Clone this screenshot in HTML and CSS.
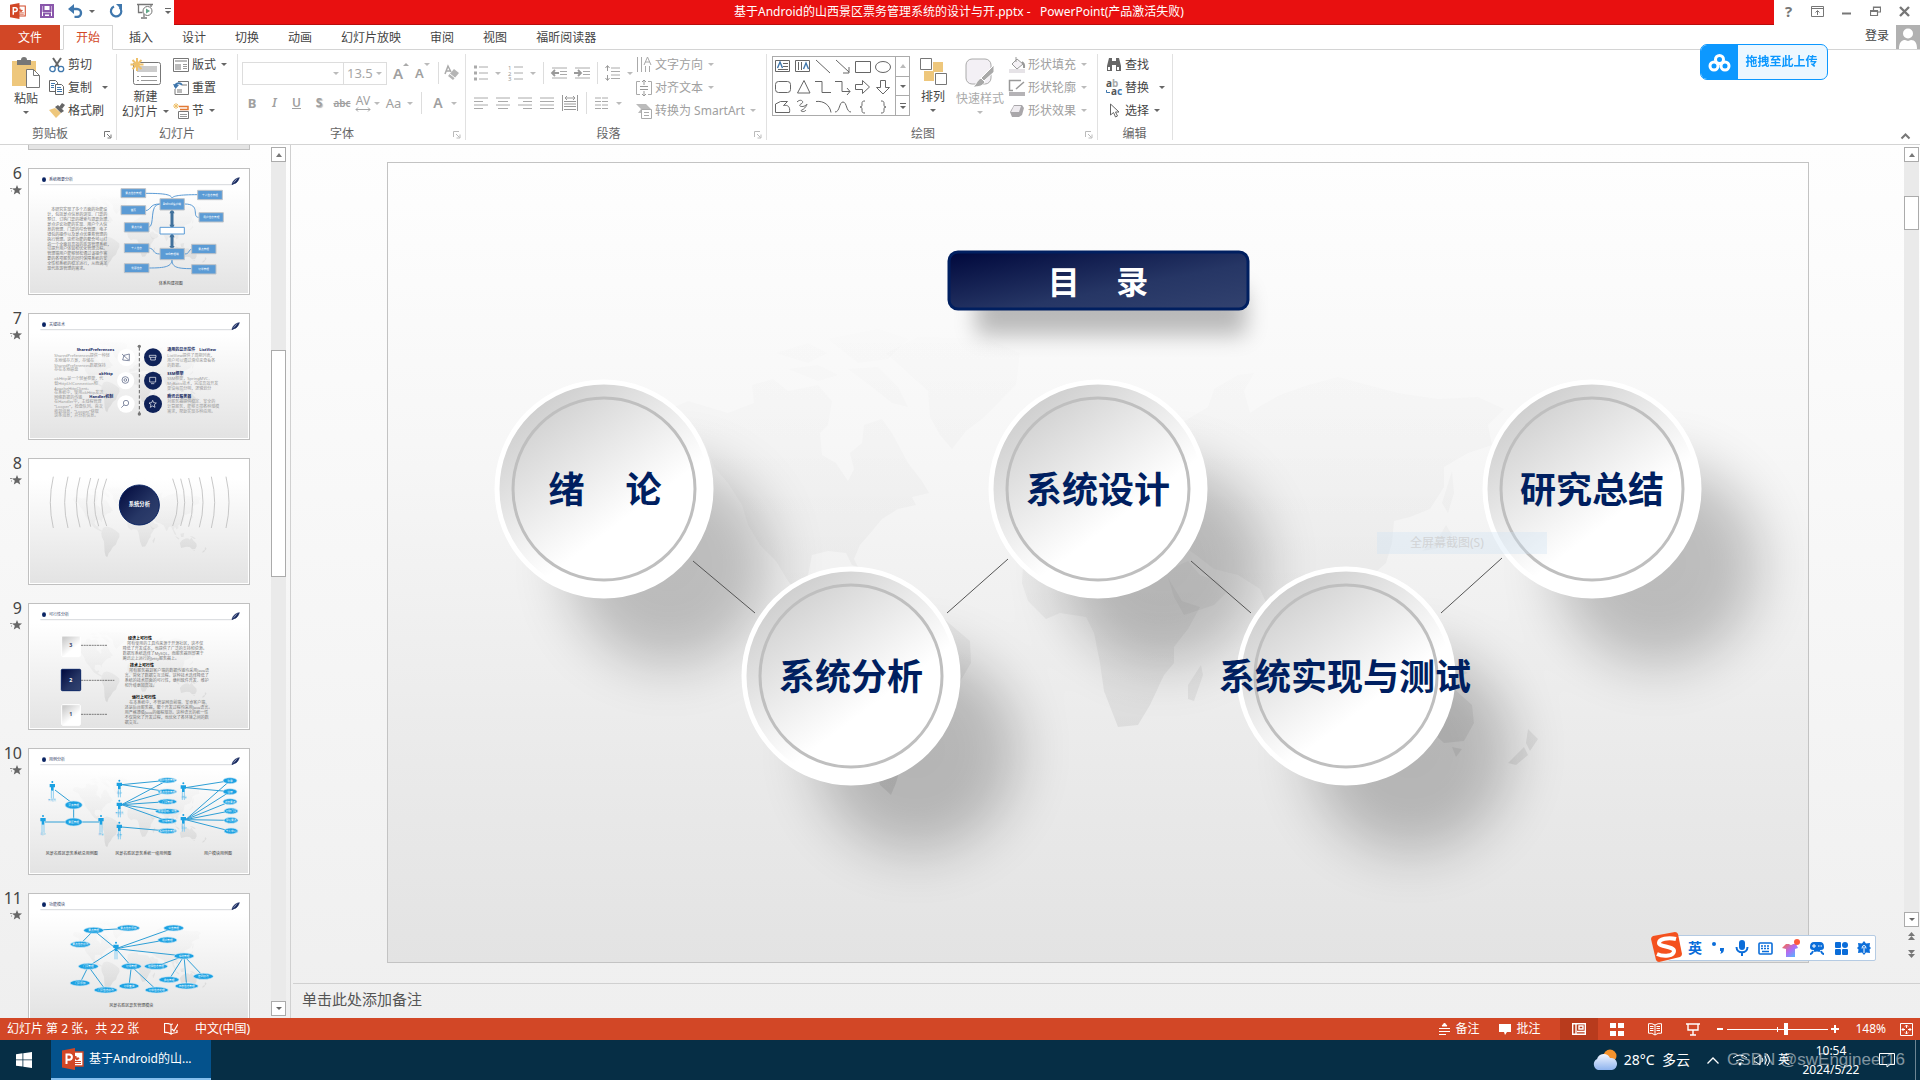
FILE: index.html
```html
<!DOCTYPE html>
<html lang="zh-CN">
<head>
    <meta charset="UTF-8">
    <title>基于Android的山西景区票务管理系统的设计与开.pptx - PowerPoint</title>
    <link rel="stylesheet" href="styles.css">
</head>
<body>
<svg class="defs" width="0" height="0">
    <defs>
        <linearGradient id="mapFill" gradientUnits="userSpaceOnUse" x1="0" y1="170" x2="0" y2="640">
            <stop offset="0" stop-color="#000" stop-opacity="0.005"/>
            <stop offset="0.5" stop-color="#000" stop-opacity="0.03"/>
            <stop offset="1" stop-color="#000" stop-opacity="0.08"/>
        </linearGradient>
        <linearGradient id="disc" x1="0.15" y1="0.1" x2="0.75" y2="0.9">
            <stop offset="0" stop-color="#cdcdcd"/>
            <stop offset="0.7" stop-color="#fff"/>
        </linearGradient>
        <linearGradient id="navy" x1="0" y1="0" x2="1" y2="1">
            <stop offset="0" stop-color="#00083c"/>
            <stop offset="0.6" stop-color="#263665"/>
            <stop offset="1" stop-color="#32426f"/>
        </linearGradient>
        <linearGradient id="shirt" x1="0" y1="0" x2="1" y2="1">
            <stop offset="0" stop-color="#ff6a3c"/>
            <stop offset="0.5" stop-color="#b06cf5"/>
            <stop offset="1" stop-color="#3fc8ff"/>
        </linearGradient>
        <linearGradient id="cloud" x1="0" y1="0" x2="0" y2="1">
            <stop offset="0" stop-color="#f2f6ff"/>
            <stop offset="1" stop-color="#8fb4ee"/>
        </linearGradient>
        <filter id="blur" x="-50%" y="-50%" width="200%" height="200%"><feGaussianBlur stdDeviation="28"/></filter>
        <filter id="blurSmall" x="-20%" y="-80%" width="140%" height="260%"><feGaussianBlur stdDeviation="11"/></filter>

        <!-- world map -->
        <symbol id="map" viewBox="0 0 1420 799">
            <g fill="url(#mapFill)">
                <path d="M282 246L300 238 340 250 366 240 364 222 385 216 400 228 430 222 444 238 440 262 432 270 434 292 448 300 460 318 466 306 462 290 474 280 476 262 494 256 504 270 520 300 534 318 541 330 524 334 528 342 510 346 494 356 484 368 472 382 466 396 470 404 464 402 458 390 440 388 424 392 420 412 432 430 446 424 452 432 442 442 456 452 470 460 466 466 440 454 418 440 400 418 388 398 372 382 360 362 354 342 340 320 326 304 316 280 296 272 280 262Z"/>
                <path d="M388 190L420 180 440 190 420 200ZM400 206L430 202 450 212 430 218ZM440 176L490 166 520 176 500 196 470 200ZM460 206L490 204 510 224 520 244 504 240 484 224Z"/>
                <path d="M498 190L530 174 600 176 632 190 628 222 610 240 594 256 578 268 564 286 552 272 542 254 540 228 520 210Z"/>
                <path d="M476 440L500 432 530 440 556 456 582 478 583 500 570 522 560 550 540 566 526 590 512 606 508 620 503 632 492 622 486 596 484 560 482 530 468 500 464 476Z"/>
                <path d="M636 386L660 376 700 374 704 386 740 390 770 394 782 418 794 438 812 444 800 466 786 484 786 500 776 512 762 542 750 562 730 564 716 528 712 500 706 470 698 454 672 450 658 456 640 438 634 420Z"/>
                <path d="M813 502L815 512 806 538 800 536 800 522Z"/>
                <path d="M778 408L800 398 812 412 830 418 838 430 826 442 796 452 786 434Z"/>
                <path d="M648 370L646 350 670 348 676 330 700 318 724 300 760 280 800 256 820 244 826 226 850 212 866 210 856 228 862 250 874 242 892 232 920 222 950 214 980 222 1010 230 1050 236 1090 234 1116 246 1100 262 1104 282 1080 290 1056 304 1056 324 1042 346 1022 354 1006 358 1004 380 998 400 980 416 966 424 966 444 954 450 944 432 936 450 948 472 954 490 942 482 930 456 918 432 904 436 894 456 888 462 880 444 872 426 850 412 826 406 808 392 790 380 774 376 760 364 730 366 714 372 700 354 680 366Z"/>
                <path d="M1064 308L1066 330 1060 350 1054 340ZM1058 362L1064 372 1048 386 1034 388 1050 376ZM944 494L960 500 974 512 966 516ZM980 480L1004 474 1000 500 984 500ZM1040 494L1060 498 1080 510 1070 514Z"/>
                <path d="M976 540L990 522 1012 510 1030 508 1040 518 1052 504 1064 524 1084 542 1086 560 1076 578 1056 580 1040 566 1020 564 984 572Z"/>
                <path d="M1064 584L1074 586 1068 594ZM1140 566L1150 576 1142 588 1138 580ZM1136 584L1140 592 1128 602 1120 600Z"/>
            </g>
        </symbol>

        <symbol id="ppt" viewBox="0 0 22 22">
            <path d="M12 4h9v14h-9z" fill="#fff" stroke="#d24726" stroke-width="1.4"/>
            <path d="M14 8a2 2 0 1 0 3 2h-3zM13 13.500h6M13 15.500h6" fill="#d24726" stroke="#d24726"/>
            <path d="M0 2.500L13 0v22L0 19.500z" fill="#d24726"/>
            <path d="M4.500 16V6.500h2.800a2.600 2.600 0 0 1 0 5.200H4.800" fill="none" stroke="#fff" stroke-width="2"/>
        </symbol>
        <symbol id="star" viewBox="0 0 12 10">
            <path d="M7 0l1.300 3.300 3.700.2-2.800 2.300 1 3.700L7 7.500 3.800 9.500l1-3.700L2 3.500l3.700-.2z" fill="#666"/>
            <path d="M0 3.500h2M1 6h1" stroke="#777" stroke-width=".8"/>
        </symbol>
        <symbol id="launcher" viewBox="0 0 8 8">
            <path d="M.5 6V.5H6M3 3l3.500 3.500M7 3.500V7H3.500" fill="none" stroke="currentColor"/>
        </symbol>

        <!-- header strip shared by the content slides -->
        <g id="slideHead">
            <ellipse cx="48" cy="35" rx="6" ry="7" fill="#0a2463"/>
            <path d="M37 50H612" stroke="#c3c6cc" stroke-width="2"/>
            <path d="M612 50c2-10 8-18 22-21-3 10-9 17-16 18l-6 3z" fill="#16295f" stroke="#16295f" stroke-width="2"/>
            <path d="M617 44l9-10" stroke="#dde" stroke-width="2"/>
        </g>
        <g id="actor">
            <circle cx="0" cy="-18" r="3" fill="#1ba1e2"/>
            <path d="M-8-12H8V-2H4V8H-4V-2H-8z" fill="#1ba1e2"/>
            <path d="M-3 8V32M3 8V32" stroke="#8bcdf0" stroke-width="3"/>
        </g>
    </defs>
</svg>

<div class="app">
    <header class="titlebar">
        <div class="quick">
            <svg width="16" height="16"><use href="#ppt"/></svg>
            <button class="save" title="保存"><svg width="14" height="14" viewBox="0 0 14 14"><path d="M1 1h12v12H1zM3.500 1v6h7V1M4 13V9.500h6V13" fill="none" stroke="#8a57ab" stroke-width="2"/></svg></button>
            <button class="undo" title="撤消"><svg width="15" height="14" viewBox="0 0 15 14"><path d="M2 5h7a4 4 0 0 1 0 8H6.500" fill="none" stroke="#3f77ad" stroke-width="2.400"/><path d="M6 0L0 5l6 5z" fill="#3f77ad"/></svg><i class="caret"></i></button>
            <button class="redo" title="重复"><svg width="14" height="14" viewBox="0 0 14 14"><path d="M5 2.400A5.200 5.200 0 1 0 10.500 3.200" fill="none" stroke="#3f77ad" stroke-width="2.200"/><path d="M7 0h6v6z" fill="#3f77ad"/></svg></button>
            <button class="show" title="从头开始"><svg width="16" height="16" viewBox="0 0 16 16"><path d="M0 1.500h16M1.500 2v7.500h4M14 2v2M7 11v3M4 15h6" fill="none" stroke="#777" stroke-width="1.300"/><circle cx="10.500" cy="8" r="4.500" fill="#fff" stroke="#777"/><path d="M9 5.500v5l4-2.500z" fill="#5fa888"/></svg></button>
            <button class="more" title="自定义"><i class="bar"></i><i class="caret"></i></button>
        </div>
        <h1 class="doc-title">基于Android的山西景区票务管理系统的设计与开.pptx -&nbsp;&nbsp; PowerPoint(产品激活失败)</h1>
        <div class="window-buttons">
            <button title="帮助" class="help">?</button>
            <button title="功能区显示选项"><svg width="13" height="11" viewBox="0 0 13 11"><path d="M.5.500h12v10H.5zM.5 2.500h12M6.500 9V5M4.500 6.500l2-2 2 2" fill="none" stroke="#777"/></svg></button>
            <button title="最小化"><svg width="10" height="11" viewBox="0 0 10 11"><path d="M0 7.500h9" stroke="#777" stroke-width="2"/></svg></button>
            <button title="还原"><svg width="11" height="11" viewBox="0 0 11 11"><path d="M3.500 4V1h7v5H8M.5 4.500h7v5h-7zM.5 5.500h7M3.500 1.500h7" fill="none" stroke="#777" stroke-width="1.200"/></svg></button>
            <button title="关闭"><svg width="11" height="11" viewBox="0 0 11 11"><path d="M1 1l9 9M10 1l-9 9" stroke="#777" stroke-width="2.400"/></svg></button>
        </div>
    </header>

    <nav class="tabs">
        <button class="tab file">文件</button>
        <button class="tab active">开始</button>
        <button class="tab">插入</button>
        <button class="tab">设计</button>
        <button class="tab">切换</button>
        <button class="tab">动画</button>
        <button class="tab">幻灯片放映</button>
        <button class="tab">审阅</button>
        <button class="tab">视图</button>
        <button class="tab">福昕阅读器</button>
        <a class="login" href="#">登录</a>
        <svg class="avatar" width="24" height="24" viewBox="0 0 24 24"><path d="M0 0h24v24H0z" fill="#b1b1b1"/><circle cx="12" cy="8.500" r="5" fill="#fff"/><path d="M3 24c0-7 3-9 6-9l3 1 3-1c4 0 6 3 6 9z" fill="#fff"/></svg>
    </nav>

    <section class="ribbon">
        <div class="group clipboard">
            <div class="tools">
                <button class="big">
                    <svg width="28" height="30" viewBox="0 0 28 30"><path d="M0 3h24v25H0z" fill="#eec77c"/><path d="M5 2h4a3 3 0 0 1 6 0h4v5H5z" fill="#777"/><path d="M14.500 11.500h7l6 6v12h-13z" fill="#fff" stroke="#777"/><path d="M21.500 11.500v6h6" fill="none" stroke="#777"/></svg>
                    <span>粘贴</span><i class="caret"></i>
                </button>
                <div class="stack">
                    <button class="small"><svg width="16" height="16" viewBox="0 0 16 16"><path d="M4 1l6 9M12 1L6 10" stroke="#666" stroke-width="2"/><circle cx="3.500" cy="12" r="2.700" fill="none" stroke="#3f77ad" stroke-width="1.300"/><circle cx="12" cy="12" r="2.700" fill="none" stroke="#3f77ad" stroke-width="1.300"/></svg>剪切</button>
                    <button class="small wide"><svg width="16" height="16" viewBox="0 0 16 16"><path d="M.5.500h6l2 2v9h-8z" fill="#fff" stroke="#666"/><path d="M6.500 4.500h6l2 2v8h-8z" fill="#fff" stroke="#666"/><path d="M2 3.500h4M2 5.500h3M2 7.500h3M8 7.500h4M8 9.500h5M8 11.500h5" stroke="#3f77ad"/></svg>复制<i class="caret"></i></button>
                    <button class="small"><svg width="16" height="16" viewBox="0 0 16 16"><path d="M0 7l6-2 6 5-5 5z" fill="#eec77c"/><path d="M6 4l3-2 6 6-3 2z" fill="#666"/><path d="M10 4l3-4 3 2-3 4z" fill="#666"/></svg>格式刷</button>
                </div>
            </div>
            <div class="group-name">剪贴板<svg class="launcher" width="8" height="8"><use href="#launcher"/></svg></div>
        </div>

        <div class="group slides">
            <div class="tools">
                <button class="big">
                    <svg width="31" height="28" viewBox="0 0 31 28"><rect x="3.500" y="4.500" width="27" height="22" rx="2" fill="#fff" stroke="#777"/><path d="M7 8h20v6H7z" fill="#ccc"/><path d="M7 18.500h2M11 18.500h16M7 22.500h2M11 22.500h16" stroke="#999"/><path d="M7 0v13M.5 6.500h13M2.500 2l9 9M11.500 2l-9 9" stroke="#eec06a" stroke-width="2"/></svg>
                    <span>新建</span><span>幻灯片<i class="caret"></i></span>
                </button>
                <div class="stack">
                    <button class="small"><svg width="16" height="14" viewBox="0 0 16 14"><path d="M.5.500h15v13H.5z" fill="#fff" stroke="#777"/><path d="M2 2h12v2H2zM2 6h6v6H2z" fill="#bbb"/><path d="M10 6.500h4M10 8.500h4M10 10.500h4" stroke="#999"/></svg>版式<i class="caret"></i></button>
                    <button class="small"><svg width="16" height="14" viewBox="0 0 16 14"><path d="M5 .5h10.500v13H2V8" fill="#fff" stroke="#777"/><path d="M4 8h5v4H4zM9 3h5v2H9z" fill="#bbb"/><path d="M2 6c0-4 5-5 7-2" fill="none" stroke="#3f77ad" stroke-width="1.800"/><path d="M0 3l2.500 5L6 4z" fill="#3f77ad"/></svg>重置</button>
                    <button class="small"><svg width="16" height="16" viewBox="0 0 16 16"><path d="M6 3.500h9v3H7" fill="none" stroke="#e27a35" stroke-width="1.500"/><path d="M5.500 8.500h10v7h-10z" fill="#fff" stroke="#777"/><path d="M7 11.500h7M7 13.500h7" stroke="#999"/><path d="M3 0v6M0 3h6M1 1l4 4M5 1L1 5" stroke="#eec06a"/></svg>节<i class="caret"></i></button>
                </div>
            </div>
            <div class="group-name">幻灯片</div>
        </div>

        <div class="group font disabled">
            <div class="tools rows">
                <div class="row">
                    <label class="combo face"><select aria-label="字体"><option></option></select><i class="caret"></i></label>
                    <label class="combo size"><select aria-label="字号"><option>13.5</option></select><i class="caret"></i></label>
                    <button class="glyph grow" title="增大字号">A<i class="caret up"></i></button>
                    <button class="glyph shrink" title="减小字号">A<i class="caret"></i></button>
                    <i class="sep"></i>
                    <button title="清除格式"><svg width="14" height="16" viewBox="0 0 14 16"><path d="M0 9L3 1l3 6M1 6h4" fill="none" stroke="#aaa" stroke-width="1.500"/><path d="M9 4l5 4-6 7-5-4z" fill="#b5b5b5"/><path d="M5 9l5 4" stroke="#fff"/></svg></button>
                </div>
                <div class="row second">
                    <button class="glyph b">B</button>
                    <button class="glyph i">I</button>
                    <button class="glyph u">U</button>
                    <button class="glyph s">S</button>
                    <button class="glyph abc">abc</button>
                    <button class="glyph av">AV<svg width="16" height="5" viewBox="0 0 16 5"><path d="M1 2.500h14M3 .5l-2 2 2 2M13 .5l2 2-2 2" fill="none" stroke="#a5a5a5"/></svg></button><i class="caret"></i>
                    <button class="glyph aa">Aa</button><i class="caret"></i>
                    <i class="sep"></i>
                    <button class="glyph color">A</button><i class="caret"></i>
                </div>
            </div>
            <div class="group-name">字体<svg class="launcher" width="8" height="8"><use href="#launcher"/></svg></div>
        </div>

        <div class="group para disabled">
            <div class="tools">
                <div class="rows">
                    <div class="row">
                        <svg width="14" height="16" viewBox="0 0 14 16"><path d="M0 2h3M0 8h3M0 14h3" stroke="#aaa" stroke-width="3"/><path d="M5 2h9M5 8h9M5 14h9" stroke="#aaa"/></svg><i class="caret"></i>
                        <svg width="15" height="16" viewBox="0 0 15 16"><text x="0" y="5" class="tiny">1</text><text x="0" y="11" class="tiny">2</text><text x="0" y="16" class="tiny">3</text><path d="M6 2h9M6 8h9M6 14h9" stroke="#aaa"/></svg><i class="caret"></i>
                        <i class="sep"></i>
                        <svg width="16" height="12" viewBox="0 0 16 12"><path d="M1 1h15M9 4.500h7M9 7.500h7M1 11h15" stroke="#aaa"/><path d="M1 6h7M4 3L1 6l3 3" fill="none" stroke="#999" stroke-width="1.800"/></svg>
                        <svg width="16" height="12" viewBox="0 0 16 12"><path d="M1 1h15M9 4.500h7M9 7.500h7M1 11h15" stroke="#aaa"/><path d="M0 6h7M4 3l3 3-3 3" fill="none" stroke="#999" stroke-width="1.800"/></svg>
                        <i class="sep"></i>
                        <svg width="15" height="16" viewBox="0 0 15 16"><path d="M6 3h9M6 6.500h9M6 10h9M6 13.500h9" stroke="#aaa"/><path d="M2.500 1v5M2.500 10v5M.5 3l2-2.500 2 2.500M.5 13l2 2.500 2-2.500" fill="none" stroke="#999"/></svg><i class="caret"></i>
                    </div>
                    <div class="row second">
                        <svg width="14" height="12" viewBox="0 0 14 12"><path d="M0 1h14M0 4.500h9M0 8h14M0 11.500h9" stroke="#aaa"/></svg>
                        <svg width="14" height="12" viewBox="0 0 14 12"><path d="M0 1h14M2 4.500h10M0 8h14M2 11.500h10" stroke="#aaa"/></svg>
                        <svg width="14" height="12" viewBox="0 0 14 12"><path d="M0 1h14M5 4.500h9M0 8h14M5 11.500h9" stroke="#aaa"/></svg>
                        <svg width="14" height="12" viewBox="0 0 14 12"><path d="M0 1h14M0 4.500h14M0 8h14M0 11.500h14" stroke="#aaa"/></svg>
                        <svg width="16" height="16" viewBox="0 0 16 16"><path d="M.5 0v16M15.500 0v16M2 6.500h12M2 9h12M2 11.500h12M2 14.500h12M3 3h10M5 1L3 3l2 2M11 1l2 2-2 2" fill="none" stroke="#999"/></svg>
                        <i class="sep"></i>
                        <svg width="13" height="12" viewBox="0 0 13 12"><path d="M0 1h6M0 4.500h6M0 8h6M0 11.500h6M7 1h6M7 4.500h6M7 8h6M7 11.500h6" stroke="#aaa"/></svg><i class="caret"></i>
                    </div>
                </div>
                <div class="stack">
                    <button class="small"><svg width="16" height="16" viewBox="0 0 16 16"><path d="M1.500 0v15M5.500 0v15M9.500 9v6M13.500 9v6M8 8l3.500-8L15 8M9 5h5" fill="none" stroke="#aaa"/></svg>文字方向<i class="caret"></i></button>
                    <button class="small"><svg width="16" height="16" viewBox="0 0 16 16"><path d="M4 1.500H.5v13H4M12 1.500h3.500v13H12" fill="none" stroke="#aaa"/><path d="M4 6.500h8M4 9.500h8M8 0v5M8 11v5M6 2l2-2 2 2M6 14l2 2 2-2" fill="none" stroke="#999"/></svg>对齐文本<i class="caret"></i></button>
                    <button class="small"><svg width="16" height="16" viewBox="0 0 16 16"><path d="M0 1h10l5 5H9L5 10H2l3-4z" fill="#bbb"/><path d="M5.500 6.500h10v9h-10z" fill="#fff" stroke="#aaa"/><path d="M8 9.500h5M8 12.500h5" stroke="#aaa"/></svg>转换为 SmartArt<i class="caret"></i></button>
                </div>
            </div>
            <div class="group-name">段落<svg class="launcher" width="8" height="8"><use href="#launcher"/></svg></div>
        </div>

        <div class="group draw">
            <div class="tools">
                <div class="gallery">
                    <svg width="122" height="58" viewBox="0 0 122 58">
                        <g fill="none" stroke="#666">
                            <path d="M2.500 3.500h14v11h-14zM22.500 3.500h14v11h-14zM10 6.500h5M10 9.500h5M5 12.500h10M25.500 5v8M28.500 5v8M43 3l14 13M63 3l13 12M76 10v6h-6M82.500 4.500h15v11h-15z"/>
                            <ellipse cx="110" cy="10" rx="7.500" ry="5.500"/>
                            <rect x="2.500" y="24.500" width="15" height="11" rx="3"/>
                            <path d="M31 23.500l6 12.500H24.500zM42 24.500h7v11h9M62 24.500h7v10h8M74 31l3 3.500-3 3.500M82.500 27.500h7v-4l7 6.500-7 6.500v-4h-7zM107.500 23.500h5v7h4L110 37l-6.500-6.500h4z"/>
                            <path d="M2.500 55.500V47l5-2.500h7l-4 4c4-1 7 1 6 7zM24 45c4-4 8 0 4 2s2 4 5 1-1 4-4 5 2 3 4 0M43 44.500c8-1 14 4 15 11M62 55c5 0 4-10 8-10s3 10 8 10M92 44c-3 0-3 1-3 3s0 3-2 3c2 0 2 1 2 3s0 3 3 3M108 44c3 0 3 1 3 3s0 3 2 3c-2 0-2 1-2 3s0 3-3 3"/>
                        </g>
                        <path d="M4.500 11L7 5l2.500 6M30.500 12L33 6l2.500 6" fill="none" stroke="#3f77ad" stroke-width="1.400"/>
                    </svg>
                    <div class="gallery-scroll">
                        <button title="上一行"><i class="caret up"></i></button>
                        <button title="下一行"><i class="caret"></i></button>
                        <button title="其他"><i class="bar"></i><i class="caret"></i></button>
                    </div>
                </div>
                <button class="big">
                    <svg width="27" height="28" viewBox="0 0 27 28"><path d="M13 4h10v10H13zM4 13h10v10H4z" fill="#eec77c"/><path d="M.5.500h11v11H.5zM15.500 15.500h11v11h-11z" fill="#fff" stroke="#777"/></svg>
                    <span>排列</span><i class="caret"></i>
                </button>
                <button class="big faded">
                    <svg width="30" height="30" viewBox="0 0 30 30"><rect x="1" y="1" width="25" height="25" rx="6" fill="#f3f0f5" stroke="#aaa"/><path d="M29 7v7L19 23l-3-3zM16 20l4 4c-2 4-6 5-12 5 4-3 3-6 8-9z" fill="#a9a9a9" stroke="#fff"/></svg>
                    <span>快速样式</span><i class="caret"></i>
                </button>
                <div class="stack disabled">
                    <button class="small"><svg width="16" height="16" viewBox="0 0 16 16"><path d="M0 12h16v4H0z" fill="#e6e3e7"/><path d="M8 2l6 5-6 5-5-5zM7 5V0" fill="#f5f2f6" stroke="#999"/><path d="M13 5c3 2 2 5 2 6" fill="none" stroke="#999" stroke-width="2"/></svg>形状填充<i class="caret"></i></button>
                    <button class="small"><svg width="16" height="16" viewBox="0 0 16 16"><path d="M0 12h16v4H0z" fill="#b5b3b6"/><path d="M12 .5H.5v10H4M15 2L7 9" fill="none" stroke="#999" stroke-width="1.500"/></svg>形状轮廓<i class="caret"></i></button>
                    <button class="small"><svg width="16" height="14" viewBox="0 0 16 14"><path d="M1 8l4-7h8l2 3-2 7-3 2H3z" fill="#a9a7aa"/><path d="M2 8l3-6h7l-2 6z" fill="#eeebef"/></svg>形状效果<i class="caret"></i></button>
                </div>
            </div>
            <div class="group-name">绘图<svg class="launcher" width="8" height="8"><use href="#launcher"/></svg></div>
        </div>

        <div class="group edit">
            <div class="tools">
                <div class="stack">
                    <button class="small"><svg width="16" height="14" viewBox="0 0 16 14"><path d="M3 0h3v3h4V0h3l2 8v5h-5V7H6v6H1V8z" fill="#666"/><path d="M2 9h2v3H2zM11 9h2v3h-2z" fill="#fff"/></svg>查找</button>
                    <button class="small wide"><svg width="16" height="16" viewBox="0 0 16 16"><text x="0" y="7" class="ab">a</text><text x="6" y="7" class="ab grey">b</text><text x="5" y="15" class="ab">a</text><text x="11" y="15" class="ab blue">c</text><path d="M.5 10v2.500H4" fill="none" stroke="#3f77ad"/></svg>替换<i class="caret"></i></button>
                    <button class="small"><svg width="16" height="16" viewBox="0 0 16 16"><path d="M4.500 1v11l3-2.500 2 4.500 2-1-2-4h3.500z" fill="#fff" stroke="#666"/></svg>选择<i class="caret"></i></button>
                </div>
            </div>
            <div class="group-name">编辑</div>
        </div>
        <button class="collapse" title="折叠功能区"><svg width="9" height="6" viewBox="0 0 9 6"><path d="M.5 5.500l4-4 4 4" fill="none" stroke="#777" stroke-width="2"/></svg></button>
    </section>

    <main class="work">
        <aside class="panel">
            <ol class="thumbs">
                <li class="cut"><span></span><div class="thumb"></div></li>
                <li>
                    <span class="num">6<svg width="12" height="10"><use href="#star"/></svg></span>
                    <div class="thumb">
                        <svg viewBox="6 6 654 369">
                            <use href="#map" x="6" y="6" width="654" height="369"/>
                            <use href="#slideHead"/>
                            <text x="63" y="39">系统概要分析</text>
                            <g transform="translate(-84 -84)">
                                <g class="copy">
                                    <text x="154" y="213">本研究实现了多个方面的功能设</text>
                                    <text x="142" y="228">计，包括景点信息的浏览、门票的</text>
                                    <text x="142" y="243">预订、订购门票的搜索与退票处理、</text>
                                    <text x="142" y="257">景点评论功能的实现、用户个人信</text>
                                    <text x="142" y="272">息的管理、门票的综合管理、电子</text>
                                    <text x="142" y="287">钱包的操作以及景点优惠券管理的</text>
                                    <text x="142" y="302">执行管理。这些功能的整合可以打</text>
                                    <text x="142" y="317">造一个全面且高效的旅游管理系统，</text>
                                    <text x="142" y="331">以提升用户体验和优化管理流程。</text>
                                    <text x="142" y="346">管理端用户能够轻松通过该操作需</text>
                                    <text x="142" y="361">要的各项服务的同时保障系统的安</text>
                                    <text x="142" y="376">全性和系统的稳定运行，从而满足</text>
                                    <text x="142" y="390">现代旅游管理的需求。</text>
                                </g>
                                <path d="M436 160c60 0 76 4 80 14 4-6 20-10 78-10M436 212c20-2 10-20 44-20M446 262c20-4 0-70 34-70M554 192c50 0 20 40 42 40M446 324c20 2 10 18 34 18M554 342c16 0 10-14 22-14M446 384c50 0 70-4 70-26 0 22 10 28 60 28" fill="none" stroke="#5b9bd5" stroke-width="3"/>
                                <path d="M516 212v48M516 284v38" stroke="#41719c" stroke-width="9"/>
                                <path d="M508 220l8-12 8 12zM508 254l8 12 8-12zM508 292l8-12 8 12zM508 318l8 12 8-12z" fill="#41719c"/>
                                <g fill="#5b9bd5" stroke="#bfc3c8" stroke-width="3">
                                    <path d="M363 146h74v27h-74zM593 151h74v28h-74zM480 176h73v34h-73zM363 197h74v27h-74zM597 218h73v28h-73zM373 248h74v28h-74zM373 311h74v27h-74zM575 313h73v28h-73zM480 325h73v34h-73zM373 371h74v27h-74zM575 374h73v28h-73z"/>
                                </g>
                                <path d="M480 262h73v20h-73z" fill="#fff" stroke="#5b9bd5" stroke-width="3"/>
                                <g class="node">
                                    <text x="400" y="163">景点信息管理</text><text x="630" y="168">个人信息管理</text><text x="516" y="196">Android客户端</text><text x="400" y="214">首页</text><text x="634" y="235">用户信息管理</text><text x="410" y="265">景点分类</text><text x="410" y="328">个人信息</text><text x="611" y="330">景点管理</text><text x="516" y="345">web管理端</text><text x="410" y="388">优惠信息</text><text x="611" y="391">订单管理</text>
                                </g>
                                <text x="512" y="435" class="cap">体系构建视图</text>
                            </g>
                        </svg>
                    </div>
                </li>
                <li>
                    <span class="num">7<svg width="12" height="10"><use href="#star"/></svg></span>
                    <div class="thumb">
                        <svg viewBox="6 6 654 369">
                            <use href="#map" x="6" y="6" width="654" height="369"/>
                            <use href="#slideHead"/>
                            <text x="63" y="39">关键技术</text>
                            <g transform="translate(-84 -519)">
                                <path d="M418 622V820" stroke="#666" stroke-width="3" stroke-dasharray="10 6"/>
                                <circle cx="418" cy="619" r="5" fill="#777"/><circle cx="418" cy="822" r="5" fill="#777"/>
                                <g fill="#fff"><circle cx="379" cy="652" r="26"/><circle cx="377" cy="722" r="26"/><circle cx="378" cy="792" r="26"/></g>
                                <g fill="#0f2259"><circle cx="459" cy="652" r="27"/><circle cx="459" cy="722" r="27"/><circle cx="459" cy="792" r="27"/></g>
                                <g fill="none" stroke="#4a5678" stroke-width="2"><path d="M366 642l22 20v-20l-16 4-4 14 18 2"/><circle cx="376" cy="720" r="10"/><circle cx="376" cy="720" r="4"/><circle cx="378" cy="789" r="8"/><path d="M372 795l-8 8"/></g>
                                <g fill="none" stroke="#fff" stroke-width="2"><path d="M448 646h20v6h-20zM452 652v8h14v-8M449 712h18v14h-18zM453 731h10M458 781l3 7 8 1-6 5 2 8-7-4-7 4 2-8-6-5 8-1z"/></g>
                                <g class="heading">
                                    <text x="230" y="633">SharedPreferences</text><text x="296" y="705">okHttp</text><text x="268" y="774">Handler机制</text>
                                    <text x="502" y="633">通用的显示控件　ListView</text><text x="502" y="706">SSM框架</text><text x="502" y="774">腾讯云服务器</text>
                                </g>
                                <g class="copy faint">
                                    <text x="163" y="651">SharedPreferences提供一种轻</text><text x="163" y="666">本地储存方案，存储在</text><text x="163" y="681">SharedPreferences数据保持</text><text x="163" y="694">存在本地磁盘</text>
                                    <text x="163" y="721">okHttp是一个轻量框架，代</text><text x="163" y="735">替HttpUrlConnection和</text><text x="163" y="750">ApacheHttpClient。</text><text x="163" y="763">在系统中，使用okHttp发送</text><text x="163" y="776">网络数据的传输</text><text x="163" y="790">在Handler中，主线程管理</text><text x="163" y="804">“Looper”，检查队列。首次</text><text x="163" y="819">收到消息，“Looper”获取</text><text x="163" y="832">这条消息，并分析信息。</text>
                                    <text x="502" y="651">ListView提供了周期列表，</text><text x="502" y="667">用户可以通过滑动来查看各</text><text x="502" y="681">的数据。</text><text x="502" y="721">SSM框架，SpringMVC、</text><text x="502" y="736">MyBatis技术，完成高效开发</text><text x="502" y="750">架设每层分明，逻辑划分</text><text x="502" y="790">对服务器提供稳定、安全的</text><text x="502" y="804">计算服务，能够支撑各种规模</text><text x="502" y="819">需求，帮助实现多种应用。</text>
                                </g>
                            </g>
                        </svg>
                    </div>
                </li>
                <li>
                    <span class="num">8<svg width="12" height="10"><use href="#star"/></svg></span>
                    <div class="thumb">
                        <svg viewBox="6 6 654 369">
                            <use href="#map" x="6" y="6" width="654" height="369"/>
                            <g fill="none" stroke="#bdbdbd" stroke-width="2.500">
                                <path d="M76 56q-18 78 0 154M120 56q-20 78 0 154M156 58q-22 76 0 150M188 60q-24 74 0 146M212 62q-26 72 0 142M236 62q-30 72 0 142M594 56q18 78 0 154M550 56q20 78 0 154M514 58q22 76 0 150M482 60q24 74 0 146M458 62q24 72 0 142M434 62q30 72 0 142"/>
                            </g>
                            <circle cx="334" cy="141" r="60" fill="url(#navy)" stroke="#0a2463" stroke-width="3"/>
                            <text x="334" y="145" class="round">系统分析</text>
                        </svg>
                    </div>
                </li>
                <li>
                    <span class="num">9<svg width="12" height="10"><use href="#star"/></svg></span>
                    <div class="thumb">
                        <svg viewBox="6 6 654 369">
                            <use href="#map" x="6" y="6" width="654" height="369"/>
                            <use href="#slideHead"/>
                            <text x="63" y="39">可行性分析</text>
                            <g transform="translate(-84 -459)">
                                <path d="M243 586h80M243 691h100M243 793h80" stroke="#444" stroke-width="2" stroke-dasharray="6 2"/>
                                <g stroke="#fff" stroke-width="3"><rect x="185" y="558" width="56" height="62" rx="3" fill="url(#disc)"/><rect x="185" y="764" width="56" height="62" rx="3" fill="url(#disc)"/></g>
                                <rect x="184" y="658" width="58" height="64" rx="3" fill="url(#navy)" stroke="#0a2463" stroke-width="3"/>
                                <g class="boxnum"><text x="212" y="591">3</text><text x="212" y="696" class="light">2</text><text x="212" y="798">1</text></g>
                                <g class="heading black"><text x="384" y="570">经济上可行性</text><text x="390" y="651">技术上可行性</text><text x="396" y="747">运行上可行性</text></g>
                                <g class="copy">
                                    <text x="382" y="585">所有使用的工具均来源于开源社区，这不仅</text><text x="368" y="600">降低了开发成本，也提供了广泛的支持和资源。</text><text x="368" y="615">数据库系统选择了MySQL，而服务器则部署于</text><text x="368" y="630">腾讯云上运行的Jetty服务器上。</text>
                                    <text x="388" y="666">所有服务器到客户端的数据传输均采用Java语</text><text x="374" y="681">言。简化了数据交互流程。这种技术选择降低了</text><text x="374" y="695">系统的技术层面的可行性，便利软件开发、维护</text><text x="374" y="710">和升级更加高效。</text>
                                    <text x="388" y="762">在本系统中，不管是网页前端、安卓客户端、</text><text x="374" y="777">还是后台服务器，整个开发过程均采用Java语言。</text><text x="374" y="792">用严格遵循Java的编程规范。这种语言的统一性</text><text x="374" y="807">不仅简化了开发过程，也优化了各环境之间的数</text><text x="374" y="821">据交互。</text>
                                </g>
                            </g>
                        </svg>
                    </div>
                </li>
                <li>
                    <span class="num">10<svg width="12" height="10"><use href="#star"/></svg></span>
                    <div class="thumb">
                        <svg viewBox="6 6 654 369">
                            <use href="#map" x="6" y="6" width="654" height="369"/>
                            <use href="#slideHead"/>
                            <text x="63" y="39">用例分析</text>
                            <g transform="translate(-84 -24)">
                                <path d="M165 150L215 188M221 195V246M135 246H298M365 134L502 121M365 134L502 155M365 194L502 121M365 194L502 155M365 194L502 185M365 194L502 214M365 194L502 243M365 261L502 273M557 143L690 122M557 143L690 155M557 239L690 122M557 239L690 155M557 239L690 185M557 239L690 213M557 239L690 241M557 239L690 273" stroke="#2f9fd6" stroke-width="3"/>
                                <use href="#actor" x="157" y="144"/><use href="#actor" x="129" y="246"/><use href="#actor" x="303" y="246"/>
                                <use href="#actor" x="358" y="140"/><use href="#actor" x="358" y="200"/><use href="#actor" x="358" y="266"/>
                                <use href="#actor" x="550" y="148"/><use href="#actor" x="550" y="243"/>
                                <g class="oval">
                                    <ellipse cx="221" cy="195" rx="26" ry="12"/><ellipse cx="221" cy="246" rx="26" ry="12"/>
                                    <ellipse cx="502" cy="121" rx="28" ry="8"/><ellipse cx="502" cy="155" rx="28" ry="8"/><ellipse cx="502" cy="185" rx="28" ry="8"/><ellipse cx="502" cy="214" rx="36" ry="8"/><ellipse cx="502" cy="243" rx="28" ry="8"/><ellipse cx="502" cy="273" rx="28" ry="8"/>
                                    <ellipse cx="690" cy="122" rx="21" ry="9"/><ellipse cx="690" cy="155" rx="21" ry="9"/><ellipse cx="690" cy="185" rx="21" ry="9"/><ellipse cx="693" cy="213" rx="21" ry="9"/><ellipse cx="693" cy="241" rx="21" ry="9"/><ellipse cx="693" cy="273" rx="21" ry="9"/>
                                </g>
                                <g class="node">
                                    <text x="221" y="198">票务管理</text><text x="221" y="249">景区管理</text>
                                    <text x="502" y="124">用户信息管理</text><text x="502" y="158">景点信息管理</text><text x="502" y="188">门票管理</text><text x="502" y="217">优惠活动、公告</text><text x="502" y="246">订单管理</text><text x="502" y="276">系统信息管理</text>
                                    <text x="690" y="125">登录</text><text x="690" y="158">注册</text><text x="690" y="188">浏览景点</text><text x="693" y="216">订购门票</text><text x="693" y="244">评论景点</text><text x="693" y="276">个人中心</text>
                                </g>
                                <g class="who"><text x="156" y="182">管理员</text><text x="129" y="284">用户</text><text x="303" y="284">游客</text><text x="358" y="163">用户</text><text x="358" y="222">管理员</text><text x="358" y="288">超管</text><text x="552" y="173">游客</text><text x="552" y="268">用户</text></g>
                                <text x="215" y="345" class="cap">风景名胜区票务系统总用例图</text>
                                <text x="430" y="345" class="cap">风景名胜区票务系统一级用例图</text>
                                <text x="654" y="345" class="cap">用户模块用例图</text>
                            </g>
                        </svg>
                    </div>
                </li>
                <li>
                    <span class="num">11<svg width="12" height="10"><use href="#star"/></svg></span>
                    <div class="thumb">
                        <svg viewBox="6 6 654 369">
                            <use href="#map" x="6" y="6" width="654" height="369"/>
                            <use href="#slideHead"/>
                            <text x="63" y="39">功能模块</text>
                            <g transform="translate(-84 -459)">
                                <path d="M281 571L385 565M281 571L241 612M281 571L348 626L521 564M348 626L502 599M348 626L552 648M348 626L265 679L240 729M265 679L317 750M348 626L394 679L387 738M394 679L470 750M552 648L468 679M552 648L507 719M552 648L560 738M552 648L610 709" fill="none" stroke="#2f9fd6" stroke-width="3"/>
                                <use href="#actor" x="348" y="626"/>
                                <g class="oval">
                                    <ellipse cx="281" cy="571" rx="30" ry="9"/><ellipse cx="385" cy="564" rx="34" ry="9"/><ellipse cx="241" cy="613" rx="30" ry="9"/><ellipse cx="521" cy="564" rx="30" ry="9"/><ellipse cx="502" cy="600" rx="29" ry="9"/><ellipse cx="552" cy="648" rx="30" ry="9"/><ellipse cx="265" cy="679" rx="30" ry="9"/><ellipse cx="394" cy="679" rx="30" ry="9"/><ellipse cx="468" cy="679" rx="35" ry="9"/><ellipse cx="240" cy="729" rx="30" ry="9"/><ellipse cx="317" cy="750" rx="35" ry="9"/><ellipse cx="387" cy="738" rx="30" ry="9"/><ellipse cx="470" cy="750" rx="35" ry="9"/><ellipse cx="507" cy="719" rx="30" ry="9"/><ellipse cx="560" cy="738" rx="35" ry="9"/><ellipse cx="610" cy="709" rx="30" ry="9"/>
                                </g>
                                <g class="node">
                                    <text x="281" y="574">景点管理</text><text x="385" y="567">景点信息添加</text><text x="241" y="616">景点信息修改</text><text x="521" y="567">公告管理</text><text x="502" y="603">用户管理</text><text x="552" y="651">系统管理</text><text x="265" y="682">门票管理</text><text x="394" y="682">订单管理</text><text x="468" y="682">权限信息管理</text><text x="240" y="732">门票添加</text><text x="317" y="753">门票信息修改</text><text x="387" y="741">订单查询</text><text x="470" y="753">订单信息处理</text><text x="507" y="722">角色管理</text><text x="560" y="741">日志信息管理</text><text x="610" y="712">密码修改</text>
                                </g>
                                <text x="394" y="801" class="cap">风景名胜区票务管理模块</text>
                            </g>
                        </svg>
                    </div>
                </li>
            </ol>
            <div class="scroll">
                <button title="向上"><i class="caret up"></i></button>
                <div class="track"><div class="bar-left"></div></div>
                <button title="向下"><i class="caret"></i></button>
            </div>
        </aside>

        <section class="stage">
            <div class="canvas">
                <div class="slide">
                    <svg viewBox="0 0 1420 799">
                        <use href="#map" width="1420" height="799"/>
                        <rect x="588" y="126" width="270" height="46" fill="#000" opacity=".26" filter="url(#blurSmall)"/>
                        <rect x="561" y="89" width="299" height="57" rx="9" fill="url(#navy)" stroke="#001f60" stroke-width="3"/>
                        <text x="710" y="131" class="slide-title">目&nbsp;&nbsp;&nbsp;&nbsp;&nbsp;录</text>

                        <g filter="url(#blur)" opacity=".22">
                            <circle cx="281" cy="400" r="102"/><circle cx="775" cy="400" r="102"/><circle cx="1269" cy="400" r="102"/>
                            <circle cx="528" cy="587" r="102"/><circle cx="1023" cy="587" r="102"/>
                        </g>
                        <path d="M305 398L367 450M559 450L620 396M803 398L863 450M1053 450L1114 395" stroke="#555"/>
                        <g fill="url(#disc)" stroke="#fff" stroke-width="5">
                            <circle cx="216" cy="326" r="107"/><circle cx="463" cy="513" r="107"/><circle cx="710" cy="326" r="107"/><circle cx="958" cy="513" r="107"/><circle cx="1204" cy="326" r="107"/>
                        </g>
                        <g fill="none" stroke="#bfbfbf" stroke-width="3">
                            <circle cx="216" cy="326" r="91"/><circle cx="463" cy="513" r="91"/><circle cx="710" cy="326" r="91"/><circle cx="958" cy="513" r="91"/><circle cx="1204" cy="326" r="91"/>
                        </g>
                        <g class="topic">
                            <text x="217" y="340">绪&nbsp;&nbsp;&nbsp;&nbsp;&nbsp;论</text>
                            <text x="463" y="527">系统分析</text>
                            <text x="710" y="340">系统设计</text>
                            <text x="957" y="527">系统实现与测试</text>
                            <text x="1204" y="340">研究总结</text>
                        </g>
                        <rect x="989" y="369" width="170" height="22" fill="#cfe3f3" opacity=".35"/>
                        <text x="1022" y="384" class="ghost">全屏幕截图(S)</text>
                    </svg>
                </div>
                <div class="scroll right">
                    <button title="向上"><i class="caret up"></i></button>
                    <div class="track"><div class="bar-right"></div></div>
                    <button title="向下"><i class="caret"></i></button>
                    <svg width="9" height="32" viewBox="0 0 9 32"><path d="M4.500 2L8 6H1zM4.500 6L8 10H1zM1 20h7l-3.500 4zM1 24h7l-3.500 4z" fill="#777"/></svg>
                </div>
            </div>
            <textarea class="notes" aria-label="备注" placeholder="单击此处添加备注"></textarea>

            <div class="ime">
                <svg class="ime-logo" width="32" height="32" viewBox="0 0 32 32"><path d="M3 5L25 1q2 0 3 2l4 20q0 2-2 3L9 31q-2 0-3-2L1 8q0-2 2-3z" fill="#f4511e"/><path d="M26 8C18 6 9 8 9 12s15 3 15 8-10 6-17 3" fill="none" stroke="#fff" stroke-width="4"/></svg>
                <b>英</b>
                <svg width="14" height="14" viewBox="0 0 14 14"><circle cx="3" cy="3" r="2" fill="#0b6dd9"/><path d="M9 7h4c0 4-1 5-4 6 1-1 1-2 1-3H9z" fill="#0b6dd9"/></svg>
                <svg width="14" height="16" viewBox="0 0 14 16"><rect x="4" y="0" width="6" height="10" rx="3" fill="#0b6dd9"/><path d="M1.500 7c0 7 11 7 11 0M7 12v4" fill="none" stroke="#0b6dd9" stroke-width="2"/></svg>
                <svg width="15" height="13" viewBox="0 0 15 13"><rect x="1" y="1" width="13" height="11" rx="1" fill="none" stroke="#0b6dd9" stroke-width="1.600"/><path d="M3 4h9M3 6.500h9" stroke="#0b6dd9" stroke-width="1.500" stroke-dasharray="2 1"/><path d="M4 9.500h7" stroke="#0b6dd9" stroke-width="1.500"/></svg>
                <svg width="18" height="18" viewBox="0 0 18 18"><path d="M4 5h3q2 2 4 0h3l2 4-3 1v8H4v-8L0 9z" fill="url(#shirt)"/><circle cx="15" cy="3" r="3" fill="#ff5a3c"/></svg>
                <svg width="16" height="14" viewBox="0 0 16 14"><path d="M5 1h6q4 0 4 5 0 3-3 3H4Q1 9 1 6q0-5 4-5z" fill="#0b6dd9"/><path d="M1 13q2 0 3-3M15 13q-2 0-3-3M5 10q3-1 6 0" fill="none" stroke="#0b6dd9" stroke-width="2"/><path d="M3 5h4M5 3v4M9 5h1.500M11.500 5H13" stroke="#fff"/></svg>
                <svg width="13" height="13" viewBox="0 0 13 13"><g fill="#0b6dd9"><rect width="6" height="6" rx="1"/><circle cx="10" cy="3" r="3"/><rect y="7" width="6" height="6" rx="1"/><rect x="7" y="7" width="6" height="6" rx="1"/></g></svg>
                <svg width="14" height="14" viewBox="0 0 14 14"><path d="M7 0l2 2.500 4-.5-.500 3.500L14 7l-1.500 1.500.500 3.500-4-.5L7 14l-2-2.500-4 .5.500-3.500L0 7l1.500-1.500L1 2l4 .5z" fill="#0b6dd9"/><path d="M5 7.500q0-3 2-3t2 3M7 6v6" fill="none" stroke="#fff"/></svg>
            </div>
        </section>
    </main>

    <footer class="status">
        <span class="count">幻灯片 第 2 张，共 22 张</span>
        <svg width="14" height="12" viewBox="0 0 14 12"><path d="M7 1.500Q4 0 .5.500v9Q4 9 7 11V1.500Q8 1 9 1M7 11q2-1 6-1.500V7M8 6l2 2 4-7" fill="none" stroke="#fff" stroke-width="1.200"/></svg>
        <span class="lang">中文(中国)</span>
        <button class="notes-btn"><svg width="11" height="12" viewBox="0 0 11 12"><path d="M5.500 0L8 3H3zM0 5.500h11M0 8.500h11M0 11.500h7" fill="#fff" stroke="#fff"/></svg>备注</button>
        <button class="notes-btn"><svg width="12" height="12" viewBox="0 0 12 12"><path d="M0 1h12v8H8l-2 3-1-3H0z" fill="#fff"/></svg>批注</button>
        <div class="views">
            <button class="on" title="普通视图"><svg width="14" height="12" viewBox="0 0 14 12"><path d="M.7.700h12.600v10.600H.7zM4 1v10M5 8.500h8M7 3h4v3H7z" fill="none" stroke="#fff" stroke-width="1.400"/></svg></button>
            <button title="幻灯片浏览"><svg width="14" height="13" viewBox="0 0 14 13"><path d="M0 0h6v5H0zM8 0h6v5H8zM0 8h6v5H0zM8 8h6v5H8z" fill="#fff"/></svg></button>
            <button title="阅读视图"><svg width="14" height="13" viewBox="0 0 14 13"><path d="M7 2Q4 0 .5.700v9.500Q4 9.500 7 12q3-2.500 6.500-1.800V.7Q10 0 7 2v10M2 3.500h3.500M2 5.500h3.500M2 7.500h3.500M8.500 3.500H12M8.500 5.500H12M8.500 7.500H12" fill="none" stroke="#fff"/></svg></button>
            <button title="幻灯片放映"><svg width="14" height="13" viewBox="0 0 14 13"><path d="M0 1h14M2 1v6h10V1M7 7v5M4 12h6" fill="none" stroke="#fff" stroke-width="1.400"/></svg></button>
        </div>
        <div class="zoom">
            <button title="缩小"><svg width="8" height="8" viewBox="0 0 8 8"><path d="M1 4h6" stroke="#fff" stroke-width="2"/></svg></button>
            <input type="range" min="0" max="100" value="58" aria-label="显示比例">
            <button title="放大"><svg width="8" height="8" viewBox="0 0 8 8"><path d="M0 4h8M4 0v8" stroke="#fff" stroke-width="2"/></svg></button>
        </div>
        <span class="percent">148%</span>
        <button title="适应窗口"><svg width="13" height="13" viewBox="0 0 13 13"><path d="M.5.500h12v12H.5z" fill="none" stroke="#fff"/><path d="M6.500 2v3M6.500 8v3M2 6.500h3M8 6.500h3M5 3.500L6.500 2 8 3.500M5 9.500L6.500 11 8 9.500M3.500 5L2 6.500 3.500 8M9.500 5L11 6.500 9.500 8" fill="none" stroke="#fff"/></svg></button>
    </footer>

    <div class="taskbar">
        <button class="start" title="开始"><svg width="16" height="16" viewBox="0 0 16 16"><path d="M0 2.200L6.500 1.300v6.200H0zM7.300 1.200L16 0v7.500H7.300zM0 8.300h6.500v6.300L0 13.700zM7.300 8.300H16V16l-8.700-1.200z" fill="#fff"/></svg></button>
        <button class="task"><svg width="22" height="22"><use href="#ppt"/></svg>基于Android的山...</button>
        <div class="weather">
            <svg width="26" height="22" viewBox="0 0 26 22"><circle cx="18" cy="7" r="6.500" fill="#f5932d"/><path d="M6 21a6 6 0 0 1-1-11 7 7 0 0 1 13-1 6 6 0 0 1 2 12z" fill="url(#cloud)"/></svg>
            <span>28°C&nbsp; 多云</span>
        </div>
        <svg class="chev" width="12" height="7" viewBox="0 0 12 7"><path d="M.5 6.500L6 1l5.500 5.500" fill="none" stroke="#fff" stroke-width="1.300"/></svg>
        <svg class="wifi" width="14" height="12" viewBox="0 0 14 12"><path d="M0 4q7-6 14 0M3 7q4-3 8 0" fill="none" stroke="#fff"/><circle cx="7" cy="10" r="1.500" fill="#fff"/></svg>
        <svg class="sound" width="16" height="12" viewBox="0 0 16 12"><path d="M0 4h2l4-3v10L2 8H0zM8 4q2 2 0 4M11 2q3 4 0 8M13 0q5 6 0 12" fill="none" stroke="#fff"/></svg>
        <span class="ime-lang">英</span>
        <div class="clock"><span>10:54</span><span>2024/5/22</span></div>
        <svg class="bell" width="16" height="16" viewBox="0 0 16 16"><path d="M.5 1.500h15v11H11L8 15v-2.500H.5z" fill="none" stroke="#fff"/></svg>
        <i class="peek"></i>
        <span class="mark">CSDN @swEngineer16</span>
    </div>

    <div class="upload">
        <svg width="37" height="36" viewBox="0 0 37 36"><path d="M0 0h37v36H0z" fill="#0c98ff"/><g fill="none" stroke="#fff" stroke-width="3"><circle cx="18.500" cy="14.500" r="4"/><circle cx="13" cy="21" r="4"/><circle cx="24" cy="21" r="4"/></g></svg>
        <button>拖拽至此上传</button>
    </div>
</div>
</body>
</html>
```

FILE: styles.css
```css
* {
    box-sizing: border-box;
}

html,
body {
    height: 100%;
    margin: 0;
}

body {
    font-family: "Noto Sans", "Noto Sans CJK SC", sans-serif;
    font-size: 12px;
    line-height: 16px;
    color: #444;
    overflow: hidden;
}

button {
    font: inherit;
    color: inherit;
    background: none;
    border: 0;
    padding: 0;
    display: flex;
    align-items: center;
    justify-content: center;
}

svg {
    display: block;
    flex: none;
}

.defs {
    position: absolute;
}

.app {
    display: flex;
    flex-direction: column;
    height: 100vh;
}

.caret {
    flex: none;
    width: 0;
    height: 0;
    border: 3px solid transparent;
    border-top: 3px solid #666;
    border-bottom: 0;
}

.caret.up {
    border-top: 0;
    border-bottom: 4px solid #777;
}

.bar {
    width: 6px;
    height: 1px;
    margin-bottom: 2px;
    background: #666;
}

/* title bar */
.titlebar {
    display: flex;
    height: 25px;
    background: #fff;
}

.quick {
    display: flex;
    align-items: center;
    width: 174px;
    padding: 0 3px 3px 10px;
}

.quick .save,
.quick .undo,
.quick .redo,
.quick .show {
    margin-left: 14px;
}

.quick .undo {
    gap: 6px;
}

.quick .more {
    flex-direction: column;
    margin-left: auto;
}

.doc-title {
    flex: 1;
    margin: 0;
    padding-right: 30px;
    font-size: 12px;
    font-weight: normal;
    line-height: 24px;
    text-align: center;
    color: #fff;
    background: #e81010;
    border-bottom: 1px solid #b90c0c;
    white-space: nowrap;
    overflow: hidden;
}

.window-buttons {
    display: flex;
    width: 146px;
    padding-bottom: 3px;
}

.window-buttons button {
    width: 29px;
}

.help {
    font-size: 15px;
    font-weight: bold;
    color: #777;
}

/* tabs */
.tabs {
    display: flex;
    gap: 3px;
    height: 25px;
    background: #fff;
    border-bottom: 1px solid #d4d4d4;
}

.tab {
    height: 25px;
    padding: 0 12px;
    border: 1px solid transparent;
    white-space: nowrap;
}

.tab.file {
    width: 60px;
    color: #fff;
    background: #d24726;
}

.tab.active {
    color: #d24726;
    background: #fff;
    border-color: #d4d4d4;
    border-bottom-color: #fff;
}

.login {
    margin-left: auto;
    line-height: 22px;
    color: #444;
    text-decoration: none;
}

.avatar {
    margin-left: 4px;
}

/* ribbon */
.ribbon {
    display: flex;
    height: 95px;
    background: #fff;
    border-bottom: 1px solid #d4d4d4;
}

.ribbon svg {
    overflow: visible;
}

.group {
    display: flex;
    flex-direction: column;
    position: relative;
    padding-top: 3px;
    white-space: nowrap;
}

.group::after {
    content: "";
    position: absolute;
    right: 0;
    top: 4px;
    bottom: 4px;
    width: 1px;
    background: #e1e1e1;
}

.clipboard {
    width: 117px;
    padding-left: 7px;
}

.slides {
    width: 121px;
    padding-left: 5px;
}

.font {
    width: 228px;
    padding-left: 4px;
}

.para {
    width: 301px;
    padding-left: 8px;
}

.draw {
    width: 331px;
    padding-left: 5px;
}

.edit {
    width: 75px;
    padding-left: 4px;
}

.tools {
    display: flex;
    height: 69px;
}

.group-name {
    height: 22px;
    padding-right: 24px;
    line-height: 24px;
    text-align: center;
    color: #666;
}

.slides .group-name,
.edit .group-name {
    padding-right: 6px;
}

.launcher {
    position: absolute;
    right: 5px;
    bottom: 5px;
    color: #777;
}

.disabled .launcher,
.draw .launcher {
    color: #bbb;
}

.big {
    flex-direction: column;
    justify-content: flex-start;
    padding-top: 5px;
    line-height: 15px;
}

.big svg {
    margin-bottom: 3px;
}

.big span {
    display: flex;
    align-items: center;
    gap: 5px;
}

.big > .caret {
    margin-top: 5px;
}

.clipboard .big {
    width: 38px;
}

.slides .big {
    width: 47px;
}

.draw .big {
    width: 34px;
    margin-left: 6px;
}

.draw .big.faded {
    width: 50px;
    margin-left: 5px;
    color: #aaa;
}

.stack {
    display: flex;
    flex-direction: column;
    margin-left: 4px;
}

.small {
    justify-content: flex-start;
    gap: 4px;
    height: 23px;
}

.small svg {
    margin-right: -1px;
}

.small .caret {
    margin-left: 1px;
}

.small.wide .caret {
    margin-left: 6px;
}

.disabled,
.disabled button {
    color: #a0a0a0;
}

.disabled .caret,
.faded .caret {
    border-top-color: #bbb;
}

.rows {
    flex-direction: column;
}

.row {
    display: flex;
    align-items: center;
    height: 24px;
    margin-top: 8px;
}

.row.second {
    margin-top: 6px;
}

.sep {
    flex: none;
    width: 1px;
    height: 22px;
    background: #ddd;
}

.combo {
    position: relative;
    display: flex;
    height: 23px;
}

.combo select {
    appearance: none;
    width: 102px;
    padding: 0 4px;
    font: inherit;
    font-size: 13px;
    color: #a6a6a6;
    background: #fff;
    border: 1px solid #ddd;
    border-radius: 0;
}

.combo.size {
    margin-left: -1px;
}

.combo.size select {
    width: 44px;
    padding: 0 3px;
}

.combo .caret {
    position: absolute;
    right: 5px;
    top: 10px;
}

.glyph {
    font-weight: 600;
}

.grow,
.shrink {
    height: 20px;
    margin-left: 6px;
    font-size: 15px;
}

.shrink {
    font-size: 13px;
}

.glyph .caret {
    align-self: flex-start;
}

.glyph .caret.up {
    border-bottom: 3px solid #aaa;
}

.font .sep {
    margin: 0 6px 0 8px;
}

.second .b {
    width: 20px;
    font-size: 13px;
    font-weight: bold;
}

.second .i {
    width: 25px;
    font-style: italic;
}

.second .u {
    width: 19px;
    text-decoration: underline;
}

.second .s {
    width: 26px;
    font-weight: bold;
    text-shadow: 1px 1px 1px #bbb;
}

.second .abc {
    width: 20px;
    font-size: 10px;
    text-decoration: line-through;
}

.second .av {
    flex-direction: column;
    width: 22px;
    font-weight: normal;
    line-height: 13px;
}

.second .aa {
    width: 27px;
    font-weight: normal;
    font-size: 13px;
}

.second .color {
    width: 20px;
    font-size: 14px;
}

.font .second .color + .caret {
    margin-left: 3px;
}

.para .row {
    gap: 7px;
}

.para .row.second {
    gap: 8px;
}

.para .rows {
    width: 158px;
}

.tiny {
    font-size: 6px;
    fill: #999;
}

.ab {
    font-size: 10px;
    font-weight: bold;
    fill: #555;
}

.ab.grey {
    fill: #aaa;
}

.ab.blue {
    fill: #3f77ad;
}

.gallery {
    display: flex;
    height: 60px;
    margin-top: 3px;
    border: 1px solid #ababab;
}

.gallery-scroll {
    display: flex;
    flex-direction: column;
    width: 14px;
    border-left: 1px solid #ababab;
}

.gallery-scroll button {
    flex: 1;
    flex-direction: column;
}

.gallery-scroll .up {
    border-bottom-color: #bbb;
}

.gallery-scroll button + button {
    border-top: 1px solid #ababab;
}

.collapse {
    align-self: flex-end;
    margin: 0 10px 5px auto;
}

/* work area */
.work {
    flex: 1;
    display: flex;
    min-height: 0;
    background: linear-gradient(#fefefe, #efefef);
}

.panel {
    display: flex;
    width: 291px;
    padding-right: 4px;
    border-right: 1px solid #d0d0d0;
}

.thumbs {
    flex: 1;
    margin: 0;
    padding: 0;
    list-style: none;
    overflow: hidden;
}

.thumbs li {
    display: grid;
    grid-template-columns: 22px 222px;
    gap: 6px;
    margin-bottom: 18px;
}

.thumbs .cut .thumb {
    height: 5px;
    padding: 0;
    border-top: 0;
    background: #e4e4e4;
}

.num {
    display: flex;
    flex-direction: column;
    align-items: flex-end;
    font-size: 16px;
    line-height: 10px;
    gap: 7px;
}

.thumb {
    height: 127px;
    padding: 1px;
    border: 1px solid #c0c0c0;
    background: linear-gradient(#fff 15%, #e3e3e3) content-box, #fff;
}

.thumb text {
    font-size: 12px;
    fill: #39466b;
}

.thumb .copy text {
    fill: #777;
}

.thumb .copy.faint text {
    fill: #999;
}

.thumb .node text {
    font-size: 8px;
    fill: #fff;
    text-anchor: middle;
}

.thumb .who text {
    font-size: 8px;
    fill: #5bb8e8;
    text-anchor: middle;
}

.thumb .cap {
    fill: #444;
    text-anchor: middle;
}

.thumb .heading text {
    font-weight: bold;
    fill: #16295f;
}

.thumb .heading.black text {
    fill: #000;
}

.thumb .boxnum text {
    font-size: 16px;
    font-weight: bold;
    text-anchor: middle;
}

.thumb .boxnum .light {
    fill: #fff;
}

.thumb .round {
    font-size: 16px;
    font-weight: bold;
    fill: #fff;
    text-anchor: middle;
}

.oval {
    fill: #1ba1e2;
    stroke: #c9e6f6;
    stroke-width: 2px;
}

.scroll {
    display: flex;
    flex-direction: column;
    width: 15px;
    padding: 2px 0;
}

.scroll button {
    height: 15px;
    background: #fff;
    border: 1px solid #ababab;
}

.scroll .track {
    flex: 1;
    display: flex;
    flex-direction: column;
    background: #eaeaea;
}

.bar-left {
    height: 27%;
    margin-top: 188px;
    background: #fff;
    border: 1px solid #ababab;
}

.bar-right {
    height: 34px;
    margin-top: 34px;
    background: #fff;
    border: 1px solid #ababab;
}

.scroll.right {
    margin: -17px 1px 0 95px;
}

.scroll.right svg {
    margin: 3px auto 19px;
}

.stage {
    position: relative;
    flex: 1;
    display: flex;
    flex-direction: column;
    min-width: 0;
}

.canvas {
    flex: 1;
    display: flex;
    padding: 17px 0 0 96px;
    min-height: 0;
}

.slide {
    flex: 1;
    align-self: flex-start;
    border: 1px solid #c3c3c3;
    background: linear-gradient(#fefefe, #f7f7f7 35%, #eaeaea 75%, #e3e3e3);
}

.slide svg {
    width: 100%;
    height: auto;
}

.slide text {
    white-space: pre;
}

.slide-title {
    font-size: 32px;
    font-weight: bold;
    fill: #fff;
    text-anchor: middle;
}

.topic text {
    font-size: 36px;
    font-weight: bold;
    fill: #001f60;
    text-anchor: middle;
}

.slide-title,
.topic text {
    font-family: "Noto Sans CJK SC", sans-serif;
}

.ghost {
    font-size: 12px;
    fill: #d2d4d6;
}

.notes {
    height: 35px;
    margin: 0 0 0 2px;
    padding: 4px 9px;
    font: inherit;
    font-size: 15px;
    line-height: 22px;
    background: none;
    border: 0;
    border-top: 1px solid #d0d0d0;
    resize: none;
    overflow: hidden;
}

.notes::placeholder {
    color: #555;
}

/* input method bar */
.ime {
    position: absolute;
    right: 44px;
    bottom: 57px;
    display: flex;
    align-items: center;
    justify-content: space-between;
    width: 208px;
    height: 26px;
    padding: 0 4px 0 19px;
    font-size: 14px;
    color: #0b6dd9;
    background: #fff;
    border: 1px solid #b5cbe3;
    border-radius: 2px;
}

.ime-logo {
    position: absolute;
    left: -19px;
    top: -5px;
}

/* status bar */
.status {
    display: flex;
    align-items: center;
    height: 22px;
    padding: 0 7px;
    color: #fff;
    background: #d24726;
    white-space: nowrap;
}

.status .count {
    width: 157px;
}

.status .lang {
    margin: 0 auto 0 17px;
}

.notes-btn {
    gap: 5px;
    margin-right: 20px;
}

.views {
    display: flex;
    height: 22px;
}

.views button {
    width: 38px;
}

.views .on {
    background: #b83b1d;
}

.zoom {
    display: flex;
    align-items: center;
    gap: 3px;
    margin-left: 4px;
}

.zoom input {
    appearance: none;
    width: 101px;
    height: 12px;
    margin: 0;
    background: linear-gradient(#fff, #fff) center / 1px 5px no-repeat, linear-gradient(#fff, #fff) center / 100% 1px no-repeat;
}

.zoom input::-webkit-slider-thumb {
    appearance: none;
    width: 4px;
    height: 12px;
    background: #fff;
}

.percent {
    margin: 0 14px 0 16px;
}

/* taskbar */
.taskbar {
    position: relative;
    display: flex;
    align-items: center;
    height: 40px;
    color: #fff;
    background: #062e45;
    white-space: nowrap;
}

.start {
    width: 51px;
    padding-right: 4px;
    height: 40px;
}

.task {
    justify-content: flex-start;
    gap: 5px;
    width: 160px;
    height: 40px;
    padding: 0 11px;
    background: #04528c;
    border-bottom: 2px solid #84bfee;
}

.weather {
    display: flex;
    align-items: center;
    gap: 6px;
    margin-left: auto;
    font-size: 14px;
}

.chev {
    margin-left: 17px;
}

.wifi {
    margin-left: 14px;
}

.sound {
    margin-left: 7px;
}

.ime-lang {
    margin: 0 1px 0 8px;
}

.clock {
    display: flex;
    flex-direction: column;
    align-items: center;
    width: 80px;
    line-height: 19px;
}

.bell {
    margin: 0 20px 0 8px;
}

.peek {
    width: 1px;
    height: 40px;
    margin-right: 4px;
    background: #6d8593;
}

.mark {
    position: absolute;
    right: 15px;
    top: 8px;
    font-family: "Liberation Sans", sans-serif;
    font-size: 17px;
    line-height: 24px;
    color: rgba(255, 255, 255, 0.5);
}

/* drag-to-upload widget */
.upload {
    position: fixed;
    top: 44px;
    right: 92px;
    display: flex;
    width: 128px;
    height: 36px;
    border: 1px solid #0c98ff;
    border-radius: 7px;
    background: #ecf7ff;
    overflow: hidden;
}

.upload button {
    flex: 1;
    padding-right: 2px;
    font-weight: bold;
    color: #0c98ff;
}
```
